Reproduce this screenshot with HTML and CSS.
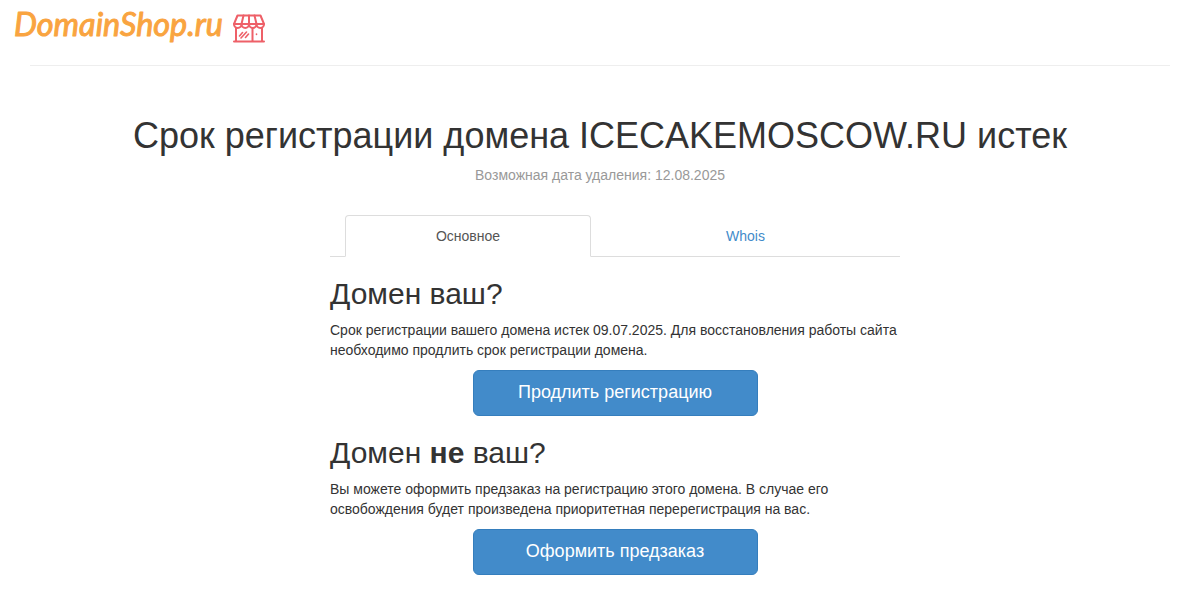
FILE: index.html
```html
<!DOCTYPE html>
<html lang="ru">
	<head>
		<meta charset="utf-8">
		<title>ICECAKEMOSCOW.RU</title>
		<link rel="stylesheet" href="styles.css">
	</head>
	<body>
		<div class="header">
			<a href="#" class="logo">
				<svg width="270" height="50" viewBox="0 0 270 50">
					<text class="logoText" x="14" y="36" textLength="209" lengthAdjust="spacingAndGlyphs">DomainShop.ru</text>
					<g class="shop">
						<path d="M237.500 15.500H260.500L264 24H234Z"/>
						<path d="M243.500 15.500L241.500 24M249 15.500V24M254.500 15.500L256.500 24"/>
						<path d="M234 24a3.750 4 0 0 0 7.500 0a3.750 4 0 0 0 7.500 0a3.750 4 0 0 0 7.500 0a3.750 4 0 0 0 7.500 0"/>
						<path d="M236 28V41.500M262 28V41.500M252.500 28V41.500M234 41.500H264"/>
						<path class="shopDetail" d="M239.500 36L242.500 32.500M241 38L246.500 32M245.500 37.500L248.500 34M256.500 34V34.500"/>
					</g>
				</svg>
			</a>
		</div>
		<hr class="line">
		<div class="title">
			<h1>Срок регистрации домена ICECAKEMOSCOW.RU истек</h1>
			<p class="muted">Возможная дата удаления: 12.08.2025</p>
		</div>
		<div class="content">
			<ul class="tabs">
				<li class="tab active"><a href="#">Основное</a></li>
				<li class="tab"><a href="#">Whois</a></li>
			</ul>
			<h2>Домен ваш?</h2>
			<p>Срок регистрации вашего домена истек 09.07.2025. Для восстановления работы сайта необходимо продлить срок регистрации домена.</p>
			<a href="#" class="btn">Продлить регистрацию</a>
			<h2>Домен <b>не</b> ваш?</h2>
			<p>Вы можете оформить предзаказ на регистрацию этого домена. В случае его освобождения будет произведена приоритетная перерегистрация на вас.</p>
			<a href="#" class="btn">Оформить предзаказ</a>
		</div>
	</body>
</html>
```
FILE: styles.css
```css
*{ box-sizing: border-box; }
body{ margin: 0; color: #333333; background: #ffffff; font-family: "Liberation Sans", Arial, sans-serif; font-size: 14px; line-height: 20px; }
a{ color: #428bca; text-decoration: none; }
h1, h2{ font-weight: 500; line-height: 1.1; }
h1{ margin: 0 0 9px; font-size: 36px; }
h2{ margin: 20px 0 10px; font-size: 30px; }
p{ margin: 0 0 10px; }
.header{ height: 65px; }
.logo svg{ display: block; }
.logoText{ font-family: Lato, sans-serif; font-size: 32px; font-style: italic; font-weight: 400; fill: #f9a440; stroke: #f9a440; stroke-width: 1; stroke-linejoin: round; }
.shop{ fill: none; stroke: #ee6068; stroke-width: 2; stroke-linecap: round; stroke-linejoin: round; }
.shopDetail{ stroke-width: 1.6; }
.line{ margin: 0 30px; border: 0; border-top: 1px solid #eeeeee; }
.title{ padding-top: 50px; text-align: center; }
.muted{ margin: 0; color: #999999; }
.content{ width: 570px; margin: 30px 0 0 330px; }
.tabs{ display: flex; height: 42px; margin: 0; padding: 0 0 0 15px; list-style: none; border-bottom: 1px solid #dddddd; }
.tab{ flex: 1; text-align: center; }
.tab a{ display: block; height: 42px; padding: 10px 15px; border: 1px solid transparent; border-radius: 4px 4px 0 0; }
.tab.active{ flex: 0 0 246px; }
.tab.active a{ color: #555555; background: #ffffff; border-color: #dddddd; border-bottom-color: transparent; }
.btn{ display: block; width: 285px; height: 46px; margin: 0 auto; padding: 9px 16px; color: #ffffff; background: #428bca; border: 1px solid #357ebd; border-radius: 6px; font-size: 18px; line-height: 24px; text-align: center; }
```
